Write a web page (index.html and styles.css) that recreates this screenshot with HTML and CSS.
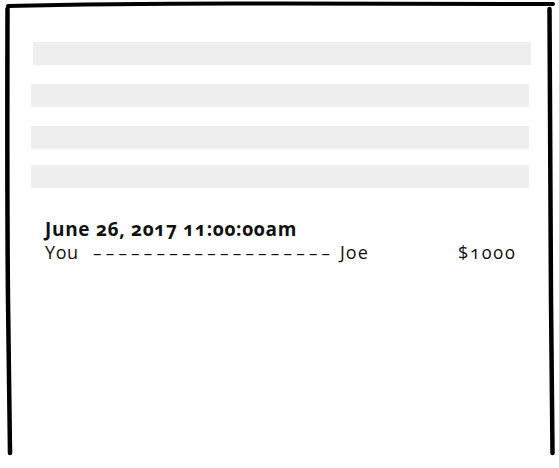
FILE: index.html
```html
<!DOCTYPE html>
<html>
<head>
<meta charset="utf-8">
<link rel="stylesheet" href="styles.css">
</head>
<body>
<div class="frame">
  <svg class="sketch" width="559" height="468" viewBox="0 0 559 468">
    <path d="M8 6 Q 120 3 280 3.5 T 553 4" fill="none" stroke="#000" stroke-width="4" stroke-linecap="round"/>
    <path d="M7.5 9 Q 7 200 8 300 T 10 453" fill="none" stroke="#000" stroke-width="4.5" stroke-linecap="round"/>
    <path d="M549.5 9 Q 550 200 551 300 T 552.5 453" fill="none" stroke="#000" stroke-width="4.5" stroke-linecap="round"/>
  </svg>
  <div class="bars">
    <div class="bar bar-first"></div>
    <div class="bar"></div>
    <div class="bar"></div>
    <div class="bar bar-last"></div>
  </div>
  <div class="entry">
    <div class="date">June 26, 2017 11:00:00am</div>
    <div class="row">
      <span class="from">You</span>
      <span class="dashes">–––––––––––––––––––</span>
      <span class="to">Joe</span>
      <span class="amount">$1000</span>
    </div>
  </div>
</div>
</body>
</html>
```

FILE: styles.css
```css
html, body {
  margin: 0;
  padding: 0;
  background: #fff;
}
body {
  width: 559px;
  height: 468px;
  overflow: hidden;
  font-family: "Open Sans", "Lato", sans-serif;
  font-variant-numeric: oldstyle-nums;
  color: #111;
}
.frame {
  position: relative;
  width: 559px;
  height: 468px;
  box-sizing: border-box;
  padding: 42px 30px 0 31px;
}
.sketch {
  position: absolute;
  left: 0;
  top: 0;
  pointer-events: none;
}
.bars {
  display: flex;
  flex-direction: column;
  gap: 19px;
}
.bar {
  height: 23px;
  width: 498px;
  background: #eeeeee;
}
.bar-first {
  margin-left: 2px;
}
.bar-last {
  margin-top: -3px;
}
.entry {
  margin-top: 30px;
  padding-left: 14px;
}
.date {
  font-weight: 700;
  font-size: 19px;
  line-height: 23px;
  letter-spacing: 0.7px;
}
.row {
  display: flex;
  align-items: baseline;
  font-size: 18px;
  line-height: 23px;
  white-space: pre;
  letter-spacing: 0.6px;
}
.from {
  width: 48px;
}
.dashes {
  width: 247px;
  font-size: 17px;
  letter-spacing: 4.2px;
}
.to {
  width: 118px;
  letter-spacing: 1px;
}
.amount {
  letter-spacing: 1.8px;
}
```
